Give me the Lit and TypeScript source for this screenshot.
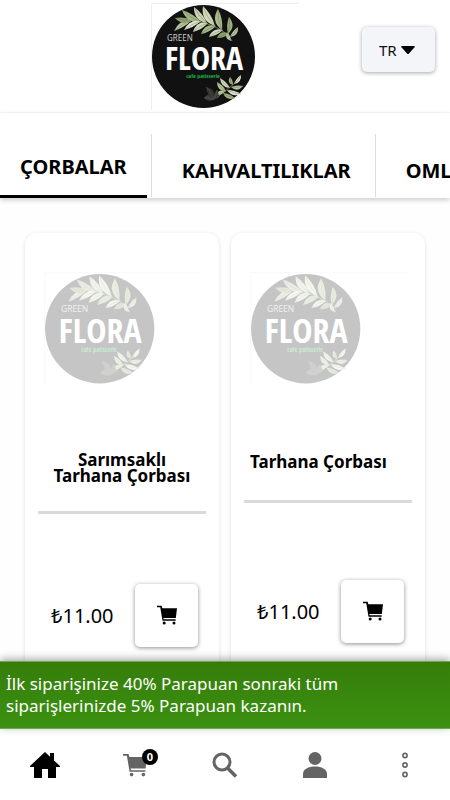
import { LitElement, html, css, svg } from "lit";
import { customElement, property } from "lit/decorators.js";

type Leaf = [number, number, number, number, number, string];

// A leaf runs from its base to its tip, bulging by `w` on one side.
const leaf = ([x1, y1, x2, y2, w, fill]: Leaf) => {
  const mx = (x1 + x2) / 2;
  const my = (y1 + y2) / 2;
  const len = Math.hypot(x2 - x1, y2 - y1);
  const nx = -(y2 - y1) / len;
  const ny = (x2 - x1) / len;
  return svg`<path fill=${fill} d="M${x1} ${y1}Q${mx + nx * w * 1.8} ${my + ny * w * 1.8} ${x2} ${y2}Q${mx - nx * w * 0.6} ${my - ny * w * 0.6} ${x1} ${y1}Z"/>
    <path fill="none" stroke="#5d7046" stroke-width=".4" d="M${x1} ${y1}Q${mx + nx * w * 0.5} ${my + ny * w * 0.5} ${x2} ${y2}"/>`;
};

const LEAVES: Leaf[] = [
  [41, 17, 23, 28, 4, "#b9c49d"],
  [42, 17, 24, 15, -4.5, "#8ba06e"],
  [50, 19, 31, 7, -5, "#a3b587"],
  [56, 20, 43, 4, -5, "#c9d2b2"],
  [64, 23, 52, 3, -5.5, "#d3dabb"],
  [71, 27, 67, 6, -5.5, "#a8b98a"],
  [77, 31, 78, 14, 4.5, "#9bae7d"],
  [79, 34, 87, 24, 3.5, "#b5c398"],
  [50, 18, 33, 27, 4, "#e2e6d0"],
  [57, 20, 42, 29, 4.5, "#d3dabb"],
  [65, 23, 50, 31, 4.5, "#a4b688"],
  [72, 27, 58, 34, 4, "#d3dabb"],
  [78, 31, 66, 35, 4, "#8ba06e"],
  [76, 29, 80, 38, 3, "#c5cfaa"],
  [75, 88, 66, 79, -3.5, "#b5c398"],
  [79, 85, 69, 75, -3.5, "#d3dabb"],
  [82, 82, 79, 74, -3, "#9fb182"],
  [83, 81, 90, 72, 3, "#dde2c8"],
  [80, 84, 92, 83, 3.5, "#b5c398"],
  [76, 87, 90, 91, 3.5, "#e2e6d0"],
  [72, 90, 84, 95, 3.5, "#9fb182"],
  [75, 88, 64, 93, 3, "#c5cfaa"],
  [62, 97, 53, 95, 5, "#3c3d3a"],
  [62, 97, 55, 84, 5, "#343532"],
  [62, 97, 66, 87, 4, "#3c3d3a"],
];

@customElement("flora-logo")
class FloraLogo extends LitElement {
  static styles = css`
    :host { display: block; }
    svg { display: block; width: 100%; height: auto; }
    .name { font: 700 32px "Noto Sans ExtraCondensed", "Open Sans Condensed", "Roboto Condensed", "Liberation Sans Narrow", "Liberation Sans", sans-serif; fill: #fff; }
    .green { font: 8px "Noto Sans", sans-serif; fill: #c9c9c9; }
    .sub { font: 700 6px "Noto Sans ExtraCondensed", "Open Sans Condensed", "Roboto Condensed", "Liberation Sans Narrow", "Liberation Sans", sans-serif; fill: #18b544; }
  `;
  render() {
    return html`<svg viewBox="0 0 148 107" role="img" aria-label="Green Flora cafe patisserie">
      <path d="M.5 107V.5H148" fill="none" stroke="#eceef2"/>
      <circle cx="52.5" cy="53.5" r="51.5" fill="#111"/>
      <path d="M81 38C75 27 60 20 38 17M66 95C70 90 78 86 86 78" fill="none" stroke="#81926a" stroke-width=".8"/>
      ${LEAVES.map(leaf)}
      <text class="green" x="16" y="38">GREEN</text>
      <text class="name" x="53" y="67" text-anchor="middle">FLORA</text>
      <text class="sub" x="52" y="75" text-anchor="middle">cafe patisserie</text>
    </svg>`;
  }
}

const cart = html`<svg class="cart" viewBox="0 0 24 24" aria-hidden="true">
  <path fill="currentColor" d="M0 1H5.6L6.4 4H24L22.6 15.5H7.6L8 17.2H22.4V18.8H6.6L3.9 2.8H0Z"/>
  <circle cx="8.6" cy="21.6" r="1.8" fill="currentColor"/><circle cx="20.4" cy="21.6" r="1.8" fill="currentColor"/>
</svg>`;

@customElement("product-card")
class ProductCard extends LitElement {
  @property() name = "";
  @property() price = "";
  static styles = css`
    :host { display: flex; flex-direction: column; box-sizing: border-box; padding: 39px 0 30px; background: #fff; border-radius: 12px; box-shadow: 0 1px 4px rgba(0, 0, 0, 0.12); }
    .picture { flex: 2 0 auto; padding: 0 18px 66px 19px; }
    .logo { opacity: 0.24; }
    .title { flex: 3 0 auto; display: flex; align-items: flex-start; padding: 0 19px 27px; }
    h2 { margin: 0; font-size: 17px; line-height: 16px; font-weight: 700; text-align: center; }
    .rule { flex: 7 0 auto; margin: 0 13px; padding-bottom: 70px; border-top: 3px solid #dadada; }
    .buy { flex: 4 0 auto; display: flex; align-items: flex-start; justify-content: space-between; padding: 0 21px 0 26px; }
    .price { font-size: 20px; line-height: 63px; }
    button { display: grid; place-items: center; width: 63px; height: 63px; padding: 0; border: 0; border-radius: 5px; color: #000; background: #fff; box-shadow: 0 1px 4px rgba(0, 0, 0, 0.45); }
    .cart { width: 22px; height: 20px; }
  `;
  render() {
    return html`<div class="picture"><flora-logo class="logo"></flora-logo></div>
      <div class="title"><h2>${this.name}</h2></div>
      <div class="rule"></div>
      <div class="buy"><span class="price">${this.price}</span>
        <button aria-label="Sepete ekle: ${this.name}">${cart}</button></div>`;
  }
}

@customElement("app-root")
class AppRoot extends LitElement {
  static styles = css`
    :host { display: flex; flex-direction: column; height: 100vh; overflow: hidden; color: #000; background: #fefefe; font-family: "Noto Sans", "Open Sans", sans-serif; }
    header { flex: none; display: grid; grid-template-columns: 1fr 148px 1fr; align-items: center; padding: 3px 15px 2px; border-bottom: 1px solid #f8f8f8; background: #fff; }
    .lang { grid-column: 3; justify-self: end; display: grid; grid-template-columns: 73px; align-items: center; margin-top: -14px; }
    .lang select { grid-area: 1 / 1; height: 45px; padding: 0 36px 0 17px; border: 0; border-radius: 5px; appearance: none; color: #111; background: #f4f5f9; font: 15px "Noto Sans", sans-serif; box-shadow: 0 1px 4px rgba(0, 0, 0, 0.35); }
    .lang svg { grid-area: 1 / 1; justify-self: end; margin-right: 20px; width: 14px; height: 8px; pointer-events: none; }
    .header-logo { grid-column: 2; }
    .tabs { flex: none; display: flex; gap: 4px; height: 64px; margin-top: 21px; overflow: hidden; }
    .bar { flex: none; background: #fff; box-shadow: 0 2px 5px rgba(0, 0, 0, 0.2); }
    .tabs a { flex: none; box-sizing: border-box; display: flex; align-items: center; color: #000; text-decoration: none; font-size: 20px; font-weight: 700; }
    .tabs .active { padding: 4px 20px 0; border-bottom: 3px solid #000; }
    .rest { display: flex; }
    .tabs .rest a { margin-bottom: 1px; padding: 10px 24px 0 30px; border-left: 1px solid #ddd; }
    main { flex: 1; min-height: 0; overflow: hidden; }
    .cards { display: grid; grid-template-columns: 1fr 1fr; gap: 12px; padding: 35px 25px; }
    .promo { flex: none; position: relative; margin: 0; padding: 11px 6px; border: solid #6fa851; border-width: 1px 0; color: #fff; background: linear-gradient(#357d0b, #3c9110); font-size: 17px; line-height: 22px; box-shadow: 0 -2px 8px rgba(0, 0, 0, 0.35); }
    .bottom { flex: none; display: grid; grid-template-columns: repeat(5, 1fr); height: 71px; background: #fff; }
    .bottom a { display: grid; place-items: center; color: #646464; }
    .bottom .home { color: #000; }
    .icon { width: 30px; height: 28px; }
    .basket { position: relative; display: block; }
    .basket .cart { display: block; width: 26px; height: 24px; }
    .badge { position: absolute; left: 20px; top: -4px; width: 16px; height: 16px; border-radius: 50%; color: #fff; background: #000; font-size: 11px; line-height: 16px; font-weight: 700; text-align: center; }
  `;
  render() {
    return html`<header>
        <flora-logo class="header-logo"></flora-logo>
        <label class="lang"><select aria-label="Dil"><option>TR</option></select>
          <svg viewBox="0 0 14 8" aria-hidden="true"><path d="M.8 0H13.2Q14.4.2 13.5 1.3L8 7.4Q7 8.4 6 7.4L.5 1.3Q-.4.2.8 0Z"/></svg></label>
      </header>
      <div class="bar"><nav class="tabs">
        <a class="active" href="#corbalar">ÇORBALAR</a>
        <div class="rest"><a href="#kahvaltiliklar">KAHVALTILIKLAR</a><a href="#omletler">OMLETLER</a></div>
      </nav></div>
      <main><div class="cards">
        <product-card name="Sarımsaklı Tarhana Çorbası" price="₺11.00"></product-card>
        <product-card name="Tarhana Çorbası" price="₺11.00"></product-card>
      </div></main>
      <p class="promo">İlk siparişinize 40% Parapuan sonraki tüm siparişlerinizde 5% Parapuan kazanın.</p>
      <nav class="bottom">
        <a class="home" href="#home" aria-label="Ana sayfa"><svg class="icon" viewBox="0 0 30 28"><path fill="currentColor" d="M15 1L20 5.7V2H24V9.5L30 15V16H26V27H18V18H12V27H4V16H0V15Z"/></svg></a>
        <a href="#cart" aria-label="Sepet"><span class="basket">${cart}<span class="badge">0</span></span></a>
        <a href="#search" aria-label="Ara"><svg class="icon" viewBox="0 0 30 28"><g fill="none" stroke="currentColor" stroke-width="3"><circle cx="12" cy="11" r="8"/><path stroke-width="3.6" d="M17.5 17L26 25.5"/></g></svg></a>
        <a href="#account" aria-label="Hesap"><svg class="icon" viewBox="0 0 30 28"><g fill="currentColor"><circle cx="15" cy="7.5" r="6.5"/><path d="M3 27V23C3 18 8.5 15.5 15 15.5S27 18 27 23V27Z"/></g></svg></a>
        <a href="#more" aria-label="Menü"><svg class="icon" viewBox="0 0 30 28"><g fill="none" stroke="currentColor" stroke-width="1.6"><circle cx="15" cy="4.5" r="2.1"/><circle cx="15" cy="14" r="2.1"/><circle cx="15" cy="23.5" r="2.1"/></g></svg></a>
      </nav>`;
  }
}
